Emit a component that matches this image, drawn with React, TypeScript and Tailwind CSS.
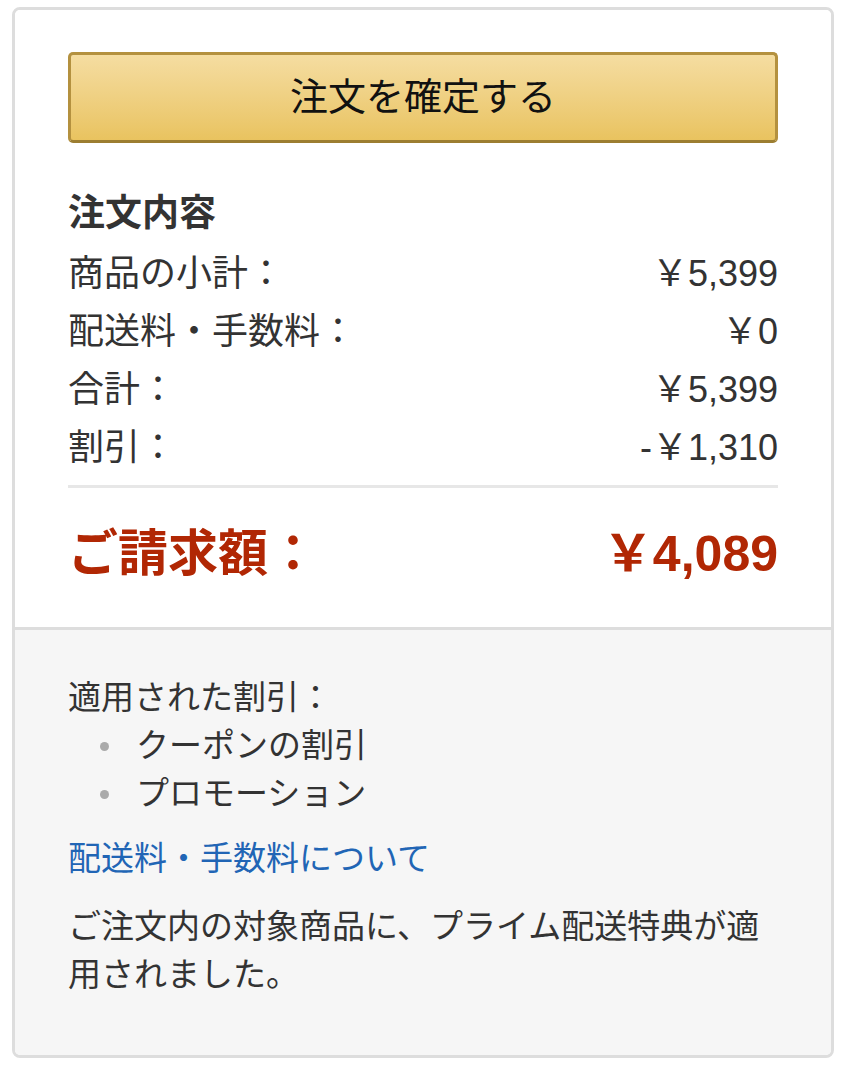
import React from "react";

const font = {
  fontFamily: '"Liberation Sans", Arial, "Noto Sans CJK JP", sans-serif',
};

function Row({ label, value }: { label: string; value: string }) {
  return (
    <div className="flex h-[58px] items-center justify-between text-[36px] leading-[58px] text-[#333]">
      <span>{label}</span>
      <span>{value}</span>
    </div>
  );
}

function Bullet({ children }: { children: React.ReactNode }) {
  return (
    <li className="flex h-[48px] items-center">
      <span className="ml-[32px] mr-[27px] inline-block h-[9px] w-[9px] rounded-full bg-[#aaaaaa]" />
      <span>{children}</span>
    </li>
  );
}

export default function App() {
  return (
    <div className="min-h-[1072px] bg-white pl-[12px] pt-[7px]" style={font}>
      <div className="w-[822px] overflow-hidden rounded-[8px] border-[3px] border-[#dddddd]">
        <div className="bg-white px-[53px] pb-[38px] pt-[42px]">
          <button className="flex h-[91px] w-full items-center justify-center rounded-[5px] border-[3px] border-[#b4913f] border-b-[#9c7e31] bg-gradient-to-b from-[#f5dda1] to-[#e9c35f] text-[38px] text-[#111]">
            注文を確定する
          </button>
          <div className="mt-[42px] h-[58px] text-[37px] font-bold leading-[58px] text-[#333]">
            注文内容
          </div>
          <div className="pt-[2px]">
            <Row label="商品の小計：" value="￥5,399" />
            <Row label="配送料・手数料：" value="￥0" />
            <Row label="合計：" value="￥5,399" />
            <Row label="割引：" value="-￥1,310" />
          </div>
          <div className="mt-[8px] h-[3px] bg-[#e7e7e7]" />
          <div className="mt-[31px] flex h-[70px] items-center justify-between text-[50px] font-bold leading-[70px] text-[#b12704]">
            <span>ご請求額：</span>
            <span>￥4,089</span>
          </div>
        </div>
        <div className="border-t-[3px] border-[#dddddd] bg-[#f6f6f6] px-[53px] pb-[56px] pt-[44px] text-[33px] leading-[48px] text-[#333]">
          <div className="h-[48px]">適用された割引：</div>
          <ul>
            <Bullet>クーポンの割引</Bullet>
            <Bullet>プロモーション</Bullet>
          </ul>
          <div className="mt-[17px] h-[48px] text-[#2165b5]">配送料・手数料について</div>
          <p className="mt-[20px]">ご注文内の対象商品に、プライム配送特典が適用されました。</p>
        </div>
      </div>
    </div>
  );
}
